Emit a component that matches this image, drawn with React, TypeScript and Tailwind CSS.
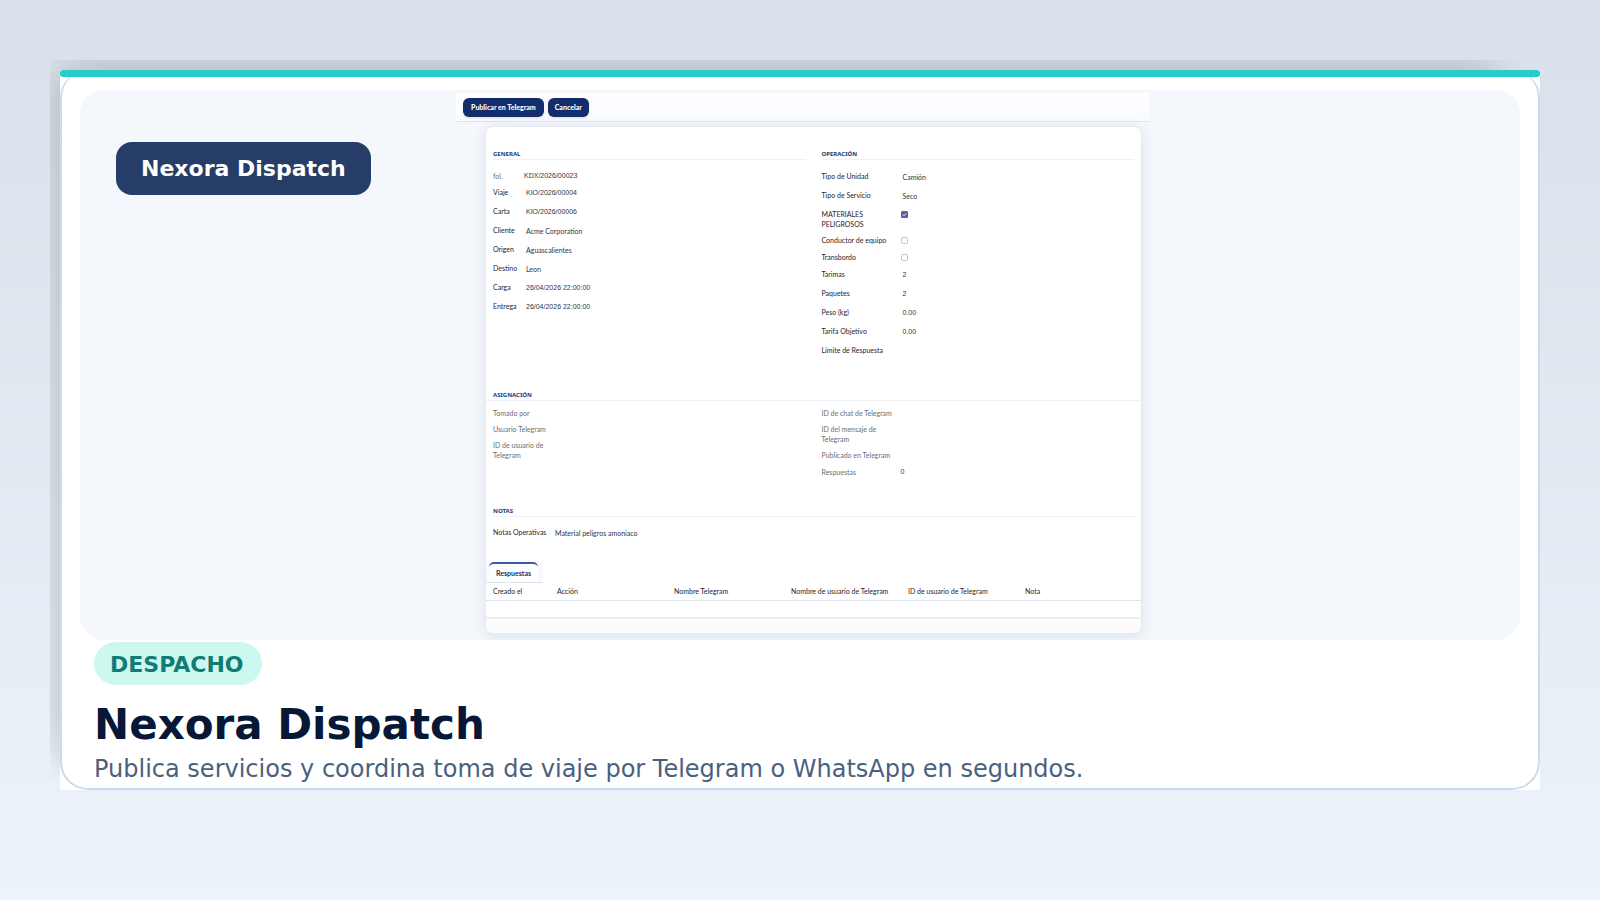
import { type ReactNode } from "react";

type Field = {
  label: ReactNode;
  value?: string;
  check?: { id: string; on: boolean };
  height: string;
  muted?: boolean;
  flush?: boolean;
};

const general: Field[] = [
  { label: "fol.", value: "KDX/2026/00023", height: "h-4", muted: true, flush: true },
  { label: "Viaje", value: "KIO/2026/00004", height: "h-[19px]" },
  { label: "Carta", value: "KIO/2026/00006", height: "h-[19px]" },
  { label: "Cliente", value: "Acme Corporation", height: "h-[19px]" },
  { label: "Origen", value: "Aguascalientes", height: "h-[19px]" },
  { label: "Destino", value: "Leon", height: "h-[19px]" },
  { label: "Carga", value: "26/04/2026 22:00:00", height: "h-[19px]" },
  { label: "Entrega", value: "26/04/2026 22:00:00", height: "h-[19px]" },
];

const operacion: Field[] = [
  { label: "Tipo de Unidad", value: "Camión", height: "h-[19px]" },
  { label: "Tipo de Servicio", value: "Seco", height: "h-[19px]" },
  { label: <>MATERIALES<br />PELIGROSOS</>, check: { id: "peligrosos", on: true }, height: "h-[26px]" },
  { label: "Conductor de equipo", check: { id: "conductor", on: false }, height: "h-[17px]" },
  { label: "Transbordo", check: { id: "transbordo", on: false }, height: "h-[17px]" },
  { label: "Tarimas", value: "2", height: "h-[19px]" },
  { label: "Paquetes", value: "2", height: "h-[19px]" },
  { label: "Peso (kg)", value: "0.00", height: "h-[19px]" },
  { label: "Tarifa Objetivo", value: "0.00", height: "h-[19px]" },
  { label: "Límite de Respuesta", height: "h-[19px]" },
];

const asignacionLeft: Field[] = [
  { label: "Tomado por", height: "h-4", muted: true },
  { label: "Usuario Telegram", height: "h-4", muted: true },
  { label: <>ID de usuario de<br />Telegram</>, height: "h-[26px]", muted: true },
];

const asignacionRight: Field[] = [
  { label: "ID de chat de Telegram", height: "h-4", muted: true },
  { label: <>ID del mensaje de<br />Telegram</>, height: "h-[26px]", muted: true },
  { label: "Publicado en Telegram", height: "h-[17px]", muted: true },
  { label: "Respuestas", value: "0", height: "h-4", muted: true, flush: true },
];

const columns = [
  { name: "Creado el", width: "w-[71px] pl-[7px]" },
  { name: "Acción", width: "w-[117px]" },
  { name: "Nombre Telegram", width: "w-[117px]" },
  { name: "Nombre de usuario de Telegram", width: "w-[117px]" },
  { name: "ID de usuario de Telegram", width: "w-[117px]" },
  { name: "Nota", width: "" },
];

function Heading({ children, className = "" }: { children: ReactNode; className?: string }) {
  return (
    <h3 className={`border-b border-[#eef0f3] pb-px font-['Noto_Sans',sans-serif] text-[6px] leading-[8px] font-bold text-[#173a7a] ${className}`}>
      {children}
    </h3>
  );
}

function Check({ id, on }: { id: string; on: boolean }) {
  return (
    <span className="relative mt-0.5 flex size-[7px]">
      <input
        id={id}
        type="checkbox"
        defaultChecked={on}
        className="peer size-[7px] appearance-none rounded-[2px] border border-[#c3c5ca] bg-white checked:rounded-[1px] checked:border-[#6a5aa0] checked:bg-[#6a5aa0]"
      />
      <svg viewBox="0 0 7 7" className="pointer-events-none absolute inset-0 hidden size-[7px] peer-checked:block">
        <path d="M1.8 3.6 3 4.8 5.3 2.4" fill="none" stroke="#fff" strokeWidth="0.9" />
      </svg>
    </span>
  );
}

function Fields({ rows, labelWidth }: { rows: Field[]; labelWidth: string }) {
  return (
    <div className="whitespace-nowrap">
      {rows.map((row, i) => (
        <div key={i} className={`flex ${row.height} ${row.muted ? "text-[#6b6e73]" : "text-[#1f242c]"}`}>
          {row.check ? (
            <>
              <label htmlFor={row.check.id} className={`${labelWidth} shrink-0`}>{row.label}</label>
              <Check id={row.check.id} on={row.check.on} />
            </>
          ) : (
            <>
              <span className={`${labelWidth} shrink-0`}>{row.label}</span>
              <span className={`text-[#2f3542] ${row.flush ? "" : "pt-px pl-0.5"} ${/\d/.test(row.value ?? "") ? "font-['Liberation_Sans',sans-serif]" : ""}`}>
                {row.value}
              </span>
            </>
          )}
        </div>
      ))}
    </div>
  );
}

function DispatchForm() {
  return (
    <div className="w-full max-w-[693px] font-[Lato,sans-serif] text-[7px] leading-[10px]">
      <div className="flex h-[29px] items-center gap-1 border-b border-[#dde5ee] bg-linear-to-b from-white to-[#f8faff] px-[7px]">
        <button className="h-[19px] rounded-md bg-[#132c6b] px-2 font-black whitespace-nowrap text-white shadow-sm">Publicar en Telegram</button>
        <button className="h-[19px] rounded-md bg-[#132c6b] px-[7px] font-black text-white shadow-sm">Cancelar</button>
      </div>

      <div className="mt-1 mr-[7px] ml-[29px] overflow-hidden rounded-lg border border-[#e4eaf3] bg-white shadow-[0_3px_14px_rgba(40,70,120,0.10)]">
        <div className="grid grid-cols-2 gap-4 pt-[23px] pr-[7px] pl-[7px]">
          <section>
            <Heading className="mb-[11px]">GENERAL</Heading>
            <Fields rows={general} labelWidth="w-[31px]" />
          </section>
          <section>
            <Heading className="mb-[11px]">OPERACIÓN</Heading>
            <Fields rows={operacion} labelWidth="w-[79px]" />
          </section>
        </div>

        <section className="mt-[27px]">
          <Heading className="mb-[7px] pl-[7px]">ASIGNACIÓN</Heading>
          <div className="grid grid-cols-2 gap-4 px-[7px]">
            <Fields rows={asignacionLeft} labelWidth="w-[79px]" />
            <Fields rows={asignacionRight} labelWidth="w-[79px]" />
          </div>
        </section>

        <section className="mt-6 px-[7px]">
          <Heading className="mb-2.5">NOTAS</Heading>
          <Fields rows={[{ label: "Notas Operativas", value: "Material peligros amoniaco", height: "h-[19px]" }]} labelWidth="w-[60px]" />
        </section>

        <div className="mt-4 flex">
          <div role="tablist" className="flex border-b border-[#dbe3f1] bg-[#f8faff] pr-[5px] pl-[3px]">
            <button role="tab" aria-selected="true" className="h-5 rounded-t-[5px] border-t-2 border-[#3b5ba9] bg-white px-[7px] font-bold text-[#173066]">
              Respuestas
            </button>
          </div>
        </div>

        <table className="w-full table-fixed border-collapse text-left text-[#1f242c]">
          <thead>
            <tr className="h-[17px] border-b border-[#dfe4ec]">
              {columns.map((c) => (
                <th key={c.name} className={`p-0 font-normal whitespace-nowrap ${c.width}`}>{c.name}</th>
              ))}
            </tr>
          </thead>
          <tbody>
            <tr className="h-[18px] border-b-2 border-[#eeeeef]">
              {columns.map((c) => (
                <td key={c.name} />
              ))}
            </tr>
          </tbody>
        </table>
        <div className="h-3.5 bg-[#fcfcfc]" />
      </div>
    </div>
  );
}

export default function App() {
  return (
    <main className="min-h-screen bg-linear-to-b from-[#d9e0e9] to-[#edf3fb] px-[60px] pt-[70px] pb-[110px] font-['DejaVu_Sans',sans-serif]">
      <div className="relative">
        <div className="absolute -top-2.5 right-2.5 bottom-2.5 -left-2.5 flex overflow-hidden pr-6 pb-3">
          <div className="grow rounded-[40px] bg-black/15 blur-[16px]" />
        </div>

        <article className="relative bg-white">
          <div className="absolute inset-x-0 top-0 h-[7px] rounded-[3px] bg-[#27cdc8]" />
          <div className="rounded-[28px] border-2 border-t-0 border-[#cddced] px-[18px] pt-5 pb-[5px]">
            <div className="relative flex justify-center overflow-hidden rounded-3xl bg-[#f4f7fc] pt-[3px] pb-1.5 pl-[5px]">
              <DispatchForm />
              <div className="absolute top-[52px] left-9 rounded-2xl bg-[#263d67] px-[25px] py-3 text-[22px] leading-[29px] font-bold text-white">
                Nexora Dispatch
              </div>
            </div>

            <div className="px-3.5">
              <div className="mt-0.5 w-fit rounded-full bg-[#cdf8ef] pt-[9px] pr-[18px] pb-[7px] pl-4 text-[22px] leading-[27px] font-bold text-[#127c74]">DESPACHO</div>
              <h1 className="mt-4 text-[42px] leading-[48px] font-bold text-[#061737]">Nexora Dispatch</h1>
              <p className="mt-1.5 text-[24px] leading-[28px] text-[#4a617e]">
                Publica servicios y coordina toma de viaje por Telegram o WhatsApp en segundos.
              </p>
            </div>
          </div>
        </article>
      </div>
    </main>
  );
}
